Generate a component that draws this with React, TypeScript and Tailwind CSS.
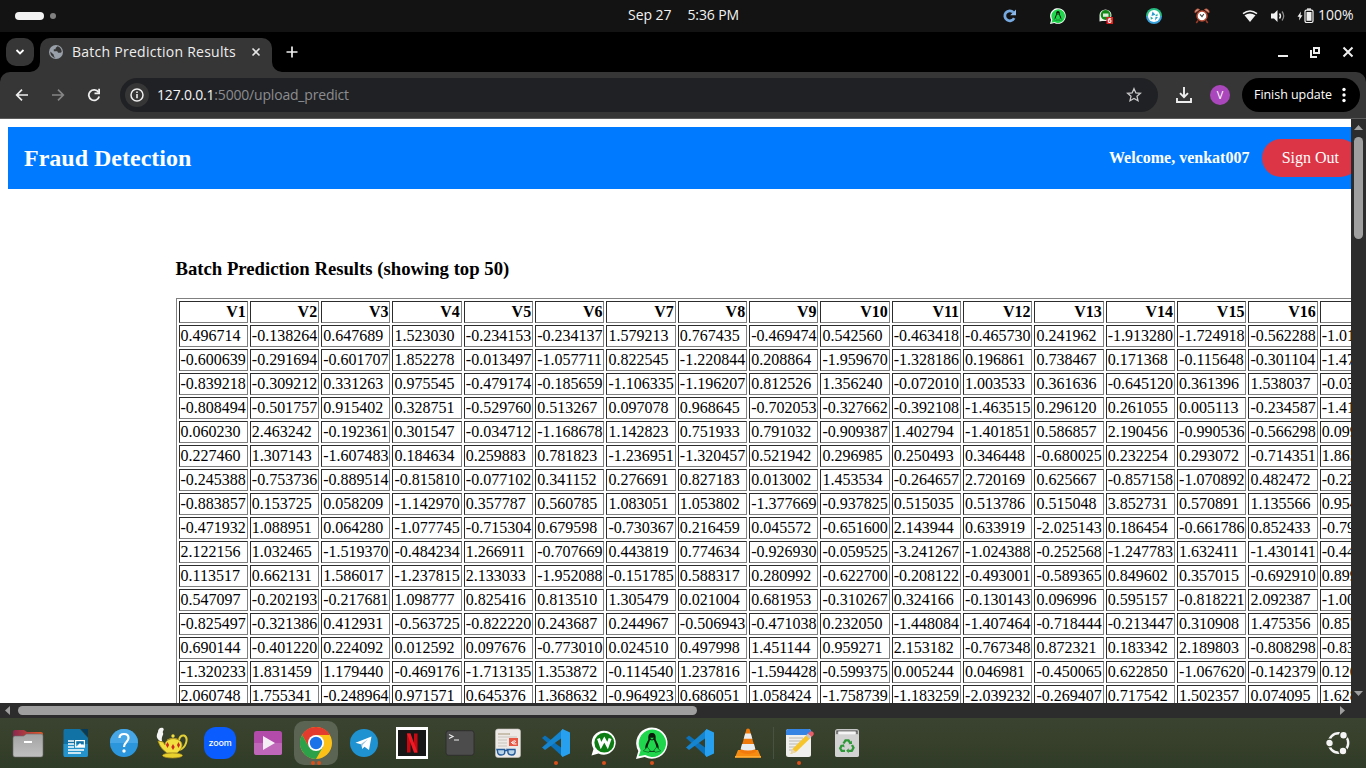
import type { ReactNode } from 'react';

const UI = "font-['Open_Sans','Noto_Sans',sans-serif]";

const DATA = `0.496714 -0.138264 0.647689 1.523030 -0.234153 -0.234137 1.579213 0.767435 -0.469474 0.542560 -0.463418 -0.465730 0.241962 -1.913280 -1.724918 -0.562288 -1.012831
-0.600639 -0.291694 -0.601707 1.852278 -0.013497 -1.057711 0.822545 -1.220844 0.208864 -1.959670 -1.328186 0.196861 0.738467 0.171368 -0.115648 -0.301104 -1.478522
-0.839218 -0.309212 0.331263 0.975545 -0.479174 -0.185659 -1.106335 -1.196207 0.812526 1.356240 -0.072010 1.003533 0.361636 -0.645120 0.361396 1.538037 -0.035826
-0.808494 -0.501757 0.915402 0.328751 -0.529760 0.513267 0.097078 0.968645 -0.702053 -0.327662 -0.392108 -1.463515 0.296120 0.261055 0.005113 -0.234587 -1.415371
0.060230 2.463242 -0.192361 0.301547 -0.034712 -1.168678 1.142823 0.751933 0.791032 -0.909387 1.402794 -1.401851 0.586857 2.190456 -0.990536 -0.566298 0.099651
0.227460 1.307143 -1.607483 0.184634 0.259883 0.781823 -1.236951 -1.320457 0.521942 0.296985 0.250493 0.346448 -0.680025 0.232254 0.293072 -0.714351 1.865775
-0.245388 -0.753736 -0.889514 -0.815810 -0.077102 0.341152 0.276691 0.827183 0.013002 1.453534 -0.264657 2.720169 0.625667 -0.857158 -1.070892 0.482472 -0.223463
-0.883857 0.153725 0.058209 -1.142970 0.357787 0.560785 1.083051 1.053802 -1.377669 -0.937825 0.515035 0.513786 0.515048 3.852731 0.570891 1.135566 0.954002
-0.471932 1.088951 0.064280 -1.077745 -0.715304 0.679598 -0.730367 0.216459 0.045572 -0.651600 2.143944 0.633919 -2.025143 0.186454 -0.661786 0.852433 -0.792521
2.122156 1.032465 -1.519370 -0.484234 1.266911 -0.707669 0.443819 0.774634 -0.926930 -0.059525 -3.241267 -1.024388 -0.252568 -1.247783 1.632411 -1.430141 -0.440044
0.113517 0.662131 1.586017 -1.237815 2.133033 -1.952088 -0.151785 0.588317 0.280992 -0.622700 -0.208122 -0.493001 -0.589365 0.849602 0.357015 -0.692910 0.899600
0.547097 -0.202193 -0.217681 1.098777 0.825416 0.813510 1.305479 0.021004 0.681953 -0.310267 0.324166 -0.130143 0.096996 0.595157 -0.818221 2.092387 -1.006017
-0.825497 -0.321386 0.412931 -0.563725 -0.822220 0.243687 0.244967 -0.506943 -0.471038 0.232050 -1.448084 -1.407464 -0.718444 -0.213447 0.310908 1.475356 0.857660
0.690144 -0.401220 0.224092 0.012592 0.097676 -0.773010 0.024510 0.497998 1.451144 0.959271 2.153182 -0.767348 0.872321 0.183342 2.189803 -0.808298 -0.839722
-1.320233 1.831459 1.179440 -0.469176 -1.713135 1.353872 -0.114540 1.237816 -1.594428 -0.599375 0.005244 0.046981 -0.450065 0.622850 -1.067620 -0.142379 0.120296
2.060748 1.755341 -0.248964 0.971571 0.645376 1.368632 -0.964923 0.686051 1.058424 -1.758739 -1.183259 -2.039232 -0.269407 0.717542 1.502357 0.074095 1.628616`
  .split('\n')
  .map((row) => row.split(' '));

function Slot({ w = 'w-12', children }: { w?: string; children: ReactNode }) {
  return <div className={`flex shrink-0 items-center justify-center ${w}`}>{children}</div>;
}

function TopBar() {
  return (
    <div className={`flex h-8 shrink-0 items-center bg-[#131313] text-[#f2f2f2] ${UI}`}>
      <div className="flex w-[628px] items-center gap-[6px] pl-[15px]">
        <span className="h-2 w-[29px] rounded-full bg-[#f2f2f2]" />
        <span className="size-[6px] rounded-full bg-[#808080]" />
      </div>
      <div className="flex w-[358px] gap-[16px] whitespace-nowrap pb-[2px] text-[14px] leading-[30px]">
        <span className="tracking-[-0.05px]">Sep 27</span>
        <span className="tracking-[-0.1px]">5:36 PM</span>
      </div>
      <Slot>
        <svg width="14" height="14" viewBox="0 0 14 14">
          <path d="M11.2 9.2A5 5 0 1 1 10.3 3.2" fill="none" stroke="#76a9e0" strokeWidth="2.8" />
          <path d="M7.2 6.2H13V.6z" fill="#8cb8ea" />
        </svg>
      </Slot>
      <Slot>
        <svg width="16" height="16" viewBox="0 0 48 48"><ChatPenguin /></svg>
      </Slot>
      <Slot>
        <svg width="16" height="16" viewBox="0 0 16 16">
          <path d="M1.5 13.500V7a6 5.800 0 1 1 6.500 6H4z" fill="#e8efe8" />
          <circle cx="7.600" cy="7" r="4.900" fill="#138a18" />
          <path d="M5 5.500h5.500v3.300H5z" fill="#dcebdc" />
          <rect x="8.500" y="9" width="6.500" height="7" fill="#e21d20" />
          <text x="9.800" y="15" fontSize="7" fontWeight="700" fill="#fff" fontFamily="Liberation Sans">6</text>
        </svg>
      </Slot>
      <Slot>
        <svg width="16" height="16" viewBox="0 0 16 16">
          <path d="M0 8a8 8 0 0 1 16 0z" fill="#25bd82" />
          <path d="M0 8a8 8 0 0 0 16 0z" fill="#3ba3dc" />
          <circle cx="8" cy="8" r="6" fill="#fff" />
          <path d="M6.500 3.500l3 3.200-4 1.300zM9.500 8.800l2.500.2-3 3.500z" fill="#2b9bd1" />
          <path d="M4.500 8.500l2.800 1.800-2.500 1.500zM11.500 5.500v2.600L9 8z" fill="#2fae9a" />
        </svg>
      </Slot>
      <Slot>
        <svg width="16" height="16" viewBox="0 0 16 16">
          <path d="M4 12.500L2.300 15M12 12.500l1.700 2.500" stroke="#9b3c29" strokeWidth="1.500" />
          <path d="M1 5A3 3 0 0 1 5.700 1.600zM15 5A3 3 0 0 0 10.300 1.600z" fill="#d99a88" stroke="#a84631" strokeWidth=".8" />
          <circle cx="8" cy="8" r="5" fill="#fff" stroke="#b64831" strokeWidth="1.500" />
          <path d="M6 6.300L8 8.600 9.800 6" fill="none" stroke="#444" strokeWidth="1.100" />
        </svg>
      </Slot>
      <Slot>
        <svg width="16" height="14" viewBox="0 0 16 14">
          <path d="M1 4.7Q8-.8 15 4.7" fill="none" stroke="#f2f2f2" strokeWidth="1.5" />
          <path d="M2.5 6.3Q8 2.5 13.5 6.3L8 13z" fill="#f2f2f2" />
        </svg>
      </Slot>
      <Slot w="w-[8px]">
        <svg className="shrink-0" width="16" height="14" viewBox="0 0 16 14">
          <path d="M1 4.5h3L7.5 1v12L4 9.5H1z" fill="#f2f2f2" />
          <path d="M9.5 4.5q2 2.5 0 5" fill="none" stroke="#f2f2f2" strokeWidth="1.4" />
          <path d="M12 2.5q3.4 4.5 0 9" fill="none" stroke="#8a8a8a" strokeWidth="1.3" />
        </svg>
      </Slot>
      <Slot w="w-[36px] pl-[11px]">
        <svg className="shrink-0" width="18" height="16" viewBox="0 0 18 16">
          <path d="M4 3.5L.5 8.8h2L2 12.5l3.5-5.3h-2z" fill="#f2f2f2" />
          <rect x="8" y="2.200" width="8" height="12.300" rx="1.400" fill="none" stroke="#f2f2f2" strokeWidth="1.200" />
          <rect x="9.500" y="4" width="5" height="8.800" fill="#f2f2f2" />
          <path d="M10 1.100h4" stroke="#f2f2f2" strokeWidth="1.400" />
        </svg>
      </Slot>
      <span className="pb-[2px] text-[14px] leading-[30px]">100%</span>
    </div>
  );
}

function TabStrip() {
  return (
    <div className={`flex h-10 shrink-0 items-start bg-black pt-[6px] text-[#eee] ${UI}`}>
      <div className="ml-[6px] flex size-7 items-center justify-center rounded-[10px] bg-[#363636]">
        <svg width="10" height="6" viewBox="0 0 10 6"><path d="M1.5 1L5 4.5 8.5 1" fill="none" stroke="#fff" strokeWidth="1.8" /></svg>
      </div>
      <div className="relative ml-[6px] flex h-[34px] w-[232px] items-start rounded-t-[10px] bg-[#363636]">
        <svg className="absolute bottom-0 -left-[10px]" width="10" height="10"><path d="M10 0v10H0A10 10 0 0 0 10 0" fill="#363636" /></svg>
        <svg className="absolute -right-[10px] bottom-0" width="10" height="10"><path d="M0 0v10h10A10 10 0 0 1 0 0" fill="#363636" /></svg>
        <div className="flex h-7 w-full items-center pl-[9px]">
          <svg width="14" height="14" viewBox="0 0 14 14">
            <circle cx="7" cy="7" r="7" fill="#9aa0a9" />
            <path d="M8.500 1.300L6.600 3v1.300H4.800v2h3.400l.9 1.500h2.400L12.700 7C12.700 3.500 10 1.500 8.500 1.300zM1.400 6.500l3.400 3.300v1.500l1.700 1.400C3.500 12.500 1.100 10 1.400 6.500z" fill="#363636" />
          </svg>
          <span className="ml-[9px] w-[179px] whitespace-nowrap text-[14px] leading-7 tracking-[0.26px]">Batch Prediction Results</span>
          <svg width="10" height="10" viewBox="0 0 10 10"><path d="M1.5 1.5l7 7m0-7l-7 7" stroke="#e5e5e5" strokeWidth="1.6" /></svg>
        </div>
      </div>
      <div className="flex h-7 w-10 items-center justify-center">
        <svg width="12" height="12"><path d="M6 .5v11M.5 6h11" stroke="#eee" strokeWidth="1.7" /></svg>
      </div>
      <div className="ml-auto flex h-7 items-center pr-[12px]">
        <svg width="11" height="12"><path d="M1 10h10" stroke="#eee" strokeWidth="2" /></svg>
        <svg className="ml-[21px]" width="12" height="11"><path d="M5 1h5v5H5zM2 3v7h6" fill="none" stroke="#eee" strokeWidth="2" /></svg>
        <svg className="ml-[21px]" width="12" height="12"><path d="M1.500 1.500l9 9m0-9l-9 9" stroke="#eee" strokeWidth="2" /></svg>
      </div>
    </div>
  );
}

function Toolbar() {
  return (
    <div className={`shrink-0 bg-black ${UI}`}>
      <div className="flex h-[47px] items-center rounded-t-[10px] border-b border-[#5c5c5c] bg-[#363636] pr-[6px]">
        <svg className="ml-[15px]" width="14" height="14" viewBox="0 0 14 14"><path d="M13 7H2M7 1.700L1.700 7 7 12.300" fill="none" stroke="#eee" strokeWidth="1.700" /></svg>
        <svg className="ml-[22px]" width="14" height="14" viewBox="0 0 14 14"><path d="M1 7h11M7 1.700L12.300 7 7 12.300" fill="none" stroke="#858585" strokeWidth="1.700" /></svg>
        <svg className="ml-[22px]" width="14" height="14" viewBox="0 0 14 14"><path d="M12.200 8.500A5.300 5.300 0 1 1 11.500 4.200" fill="none" stroke="#eee" strokeWidth="1.800" /><path d="M13 .7v5.600H7.500V4.600h3.700V.7z" fill="#eee" /></svg>
        <div className="ml-[19px] flex h-[34px] w-[1038px] items-center rounded-full bg-[#202125] pl-[5px]">
          <div className="flex size-6 items-center justify-center rounded-full bg-[#363636]">
            <svg width="14" height="14"><circle cx="7" cy="7" r="6" fill="none" stroke="#eee" strokeWidth="1.500" /><path d="M7 6v4.300M7 3.600v1.500" stroke="#eee" strokeWidth="1.600" /></svg>
          </div>
          <span className="ml-[8px] w-[969px] whitespace-nowrap text-[14px] leading-[34px] tracking-[-0.19px] text-[#8b8d90]"><span className="text-[#f5f5f5]">127.0.0.1</span>:5000/upload_predict</span>
          <svg width="16" height="16" viewBox="0 0 16 16"><path d="M8 1.700l1.900 4.200 4.500.4-3.400 3 1 4.400L8 11.400l-4 2.300 1-4.400-3.400-3 4.500-.4z" fill="none" stroke="#c9c9c9" strokeWidth="1.300" /></svg>
        </div>
        <svg className="ml-[18px]" width="16" height="16" viewBox="0 0 16 16"><path d="M8 0v10M4 6.200l4 4 4-4M1 11v4h14v-4" fill="none" stroke="#eee" strokeWidth="1.900" /></svg>
        <div className="ml-[18px] flex size-5 items-center justify-center rounded-full bg-[#ab47bc] text-[11px] text-white">V</div>
        <div className="ml-[12px] flex h-[34px] w-[118px] items-center rounded-full bg-black pl-[12px] text-white">
          <span className="w-[88px] whitespace-nowrap pt-px text-[12.500px] tracking-[-0.05px]">Finish update</span>
          <svg width="4" height="16"><circle cx="2" cy="2.500" r="1.700" fill="#fff" /><circle cx="2" cy="8" r="1.700" fill="#fff" /><circle cx="2" cy="13.500" r="1.700" fill="#fff" /></svg>
        </div>
      </div>
    </div>
  );
}

function Page() {
  return (
    <div className="h-[584px] w-[1351px] overflow-hidden bg-white pt-2 pl-2 font-['Liberation_Serif',serif] text-[16px] leading-[18px] text-black">
      <header className="flex h-[62px] w-[1359px] items-center bg-[#007bff] pl-4 text-white">
        <h1 className="w-[1085px] text-[24px] leading-[27px] font-bold">Fraud Detection</h1>
        <span className="w-[152.700px] shrink-0 font-bold">Welcome, venkat007</span>
        <span className="shrink-0 rounded-[20px] bg-[#dc3545] px-[20px] py-[10px]">Sign Out</span>
      </header>
      <main className="pt-[69px] pl-[167.500px]">
        <h3 className="mb-[19px] text-[18.720px] leading-[21px] font-bold">Batch Prediction Results (showing top 50)</h3>
        <table className="w-max border-separate border-spacing-[2px] border border-[#808080] [border-style:outset]">
          <thead>
            <tr>
              {DATA[0].map((_, i) => (
                <th key={i} className="border border-[#808080] p-px text-right font-bold [border-style:inset]">V{i + 1}</th>
              ))}
            </tr>
          </thead>
          <tbody>
            {DATA.map((row, r) => (
              <tr key={r}>
                {row.map((v, c) => (
                  <td key={c} className="border border-[#808080] p-px [border-style:inset]">{v}</td>
                ))}
              </tr>
            ))}
          </tbody>
        </table>
      </main>
    </div>
  );
}

function VScroll() {
  return (
    <div className="flex w-[15px] flex-col items-center bg-[#2c2c2c] pt-[6px]">
      <svg width="9" height="5"><path d="M0 5L4.500 0 9 5z" fill="#9f9f9f" /></svg>
      <div className="mt-[7px] h-[102px] w-[9px] rounded-full bg-[#9f9f9f]" />
      <svg className="mt-auto mb-[7px]" width="9" height="5"><path d="M0 0l4.500 5L9 0z" fill="#9f9f9f" /></svg>
    </div>
  );
}

function HScroll() {
  return (
    <div className="flex h-[15px] shrink-0 items-center bg-[#2c2c2c] pl-[5px]">
      <svg width="5" height="9"><path d="M5 0L0 4.500 5 9z" fill="#9f9f9f" /></svg>
      <div className="ml-[8px] h-[9px] w-[679px] rounded-full bg-[#9f9f9f]" />
      <svg className="mr-[21px] ml-auto" width="5" height="9"><path d="M0 0l5 4.500L0 9z" fill="#9f9f9f" /></svg>
    </div>
  );
}

function ChatPenguin() {
  return (
    <>
      <path d="M0 48l3.500-12A23.500 23.500 0 1 1 13 45z" fill="#fff" />
      <path d="M4 44l3-9A20.500 20.500 0 1 1 14 42z" fill="#1fd64c" />
      <path d="M24 9c-5 0-6 4-5.500 9.500C18 22 13 26 14 34l4 3h12l4-3c1-8-4-12-4.500-15.500C30 13 29 9 24 9z" fill="#0b1a0d" />
      <path d="M21 19q3 2 6 0c1 5 5 9 3 15q-6 4-12 0c-2-6 2-10 3-15z" fill="#1fd64c" />
      <path d="M17 30l-6 6 8 2 2-3zM31 30l6 6-8 2-2-3z" fill="#1fd64c" stroke="#0b5a1d" />
      <path d="M21 16h6l-3 3z" fill="#1fd64c" />
    </>
  );
}

function VsCode() {
  return (
    <svg width="30" height="30" viewBox="0 0 30 30">
      <path d="M1 10l3-2.500L22 21v8z" fill="#0b71b8" />
      <path d="M1 19.500L22 1v8L4 22z" fill="#1685cf" />
      <path d="M21.500 1L29 4.500v21L21.500 29l-1.500-2V3z" fill="#27a1ef" />
    </svg>
  );
}

function Dots({ n }: { n: number }) {
  return (
    <span className="absolute bottom-[3px] left-0 flex w-full justify-center gap-[2px]">
      {Array.from({ length: n }, (_, i) => <span key={i} className="size-1 rounded-full bg-[#d9501c]" />)}
    </span>
  );
}

function DockItem({ children, dots = 0, active = false }: { children: ReactNode; dots?: number; active?: boolean }) {
  return (
    <div className="relative flex h-[50px] w-12 shrink-0 items-center justify-center">
      <div className={active ? 'flex size-11 items-center justify-center rounded-[10px] bg-[#5b6353]' : ''}>{children}</div>
      <Dots n={dots} />
    </div>
  );
}

function Dock() {
  return (
    <div className="flex h-[50px] shrink-0 items-center bg-[linear-gradient(180deg,#3a4330_0%,#36402a_50%,#303b28_100%)] pl-1">
      <DockItem>
        <svg width="32" height="30" viewBox="0 0 32 30">
          <defs>
            <linearGradient id="fo"><stop stopColor="#8a2750" /><stop offset="1" stopColor="#e55a26" /></linearGradient>
            <linearGradient id="fg" x2="0" y2="1"><stop stopColor="#a3a3a3" /><stop offset="1" stopColor="#c0c0c0" /></linearGradient>
          </defs>
          <path d="M1 4q0-2 2-2h9l3 2h14q2 0 2 2v6H1z" fill="url(#fo)" />
          <path d="M1 10q0-2 2-2h8.500l3-2H29q2 0 2 2v19q0 2-2 2H3q-2 0-2-2z" fill="url(#fg)" stroke="#686868" strokeWidth=".6" />
          <path d="M12 14h8" stroke="#fff" strokeWidth="2" />
        </svg>
      </DockItem>
      <DockItem>
        <svg width="26" height="30" viewBox="0 0 26 30">
          <path d="M2 1h15l8 9v17q0 2-2 2H2q-1.500 0-1.500-2V3Q.5 1 2 1z" fill="#1172a5" />
          <path d="M.5 16H25v11q0 2-2 2H2q-1.500 0-1.500-2z" fill="#2493cc" />
          <path d="M18 1h7v8z" fill="#063c59" />
          <path d="M5 13h6M5 16h6M5 19h6M5 22h16M5 25h13" stroke="#fff" strokeWidth="1.300" />
          <rect x="12.600" y="12.600" width="8.800" height="6.500" fill="none" stroke="#fff" strokeWidth="1.200" />
          <path d="M13 19l4-4 2 2 1-1 2 3z" fill="#fff" />
        </svg>
      </DockItem>
      <DockItem>
        <svg width="30" height="30" viewBox="0 0 30 30">
          <circle cx="15" cy="15" r="14" fill="#2b96dc" />
          <path d="M1 15a14 14 0 0 1 28 0z" fill="#46a6e6" />
          <path d="M10.500 10q0-4 4.500-4 4.500 0 4.500 4c0 4-4.500 4-4.500 9" fill="none" stroke="#fff" strokeWidth="2.200" />
          <circle cx="15" cy="23" r="1.700" fill="#fff" />
        </svg>
      </DockItem>
      <DockItem>
        <svg width="34" height="32" viewBox="0 0 34 32">
          <path d="M5 14C0 11 2 7 3 5c0-3 2-5 5-4 2 2-1 3 0 5s-2 3-1 8z" fill="#f4f4f4" />
          <path d="M24 13q1-5 5-4.500c5 2 2 13-5 14.500" fill="none" stroke="#e2cf35" strokeWidth="2" />
          <path d="M3 14l5 1 2 3c0-8 16-9 17 0 0 4-3 6-5 8H12c-4-3-7-6-9-12z" fill="#f0df3e" stroke="#ae9422" strokeWidth=".8" />
          <ellipse cx="17.500" cy="28.500" rx="10" ry="2.500" fill="#e8d12d" stroke="#a98c1c" strokeWidth=".7" />
          <path d="M12 13q6-3.500 12 0" fill="none" stroke="#ae9422" />
          <circle cx="18" cy="9" r="1.700" fill="#f0df3e" />
          <path d="M12.500 15l1.600 3-1.600 3-1.600-3zM18 17l1.700 3-1.700 3-1.700-3zM23.500 15l1.500 3-1.500 3-1.500-3z" fill="#c92a23" />
        </svg>
      </DockItem>
      <DockItem>
        <div className="flex size-8 items-center justify-center rounded-[12px] bg-[#0b5cff] pb-px font-['Inter',sans-serif] text-[9px] font-medium tracking-[-0.200px] text-white">zoom</div>
      </DockItem>
      <DockItem>
        <svg width="28" height="26" viewBox="0 0 28 26">
          <rect y="1" width="28" height="24" rx="2.500" fill="#b34bab" />
          <path d="M0 13h28v9.500q0 2.500-2.500 2.500h-23Q0 25 0 22.500z" fill="#c067b9" />
          <path d="M9 6l12 7-12 7z" fill="#f5edf4" />
        </svg>
      </DockItem>
      <DockItem active dots={2}>
        <svg width="32" height="32" viewBox="0 0 32 32">
          <circle cx="16" cy="16" r="16" fill="#fbc116" />
          <path d="M2.140 8A16 16 0 0 1 29.860 8H16L9.100 20z" fill="#e33b2e" />
          <path d="M2.140 8A16 16 0 0 0 16 32l6.900-12H9.100z" fill="#2da04a" />
          <circle cx="16" cy="16" r="8" fill="#fff" />
          <circle cx="16" cy="16" r="6.200" fill="#1a73e8" />
        </svg>
      </DockItem>
      <DockItem>
        <svg width="28" height="28" viewBox="0 0 28 28">
          <circle cx="14" cy="14" r="14" fill="#1f92d1" />
          <path d="M5.500 13.800L21.500 7.500 19 21l-4.500-3.300-2.300 2.300-.6-4.600z" fill="#fff" />
          <path d="M11 15l7-4.700-5.500 5.700-.4 3.300z" fill="#9fc5dc" />
        </svg>
      </DockItem>
      <DockItem>
        <svg width="32" height="32" viewBox="0 0 32 32">
          <rect width="32" height="32" fill="#fff" /><rect x="2" y="3" width="28" height="26" fill="#171717" />
          <path d="M11 6.500h3.500v19H11zM18 6.500h3.500v19H18z" fill="#c90912" /><path d="M11 6.500h3.500l7 19H18z" fill="#f01a25" />
        </svg>
      </DockItem>
      <DockItem>
        <svg width="30" height="26" viewBox="0 0 30 26">
          <rect x="1" y=".7" width="28" height="24.600" rx="2.500" fill="#4c4c4c" stroke="#2f2f2f" />
          <path d="M4 4.500l4 2-4 2M9 10h5" fill="none" stroke="#eee" strokeWidth="1.200" />
        </svg>
      </DockItem>
      <DockItem>
        <svg width="26" height="30" viewBox="0 0 26 30">
          <rect x=".5" y="1" width="25" height="28.500" rx="2.500" fill="#ece9e6" stroke="#c3c0bc" strokeWidth=".6" />
          <path d="M3 6h12" stroke="#b6aa91" strokeWidth="1.300" />
          <path d="M3 9h19M3 12h9M3 15h9M3 18h9" stroke="#c9c4bb" strokeWidth="1" />
          <rect x="14" y="10" width="9" height="8" fill="#e85743" />
          <path d="M16.500 14.500q4-3 4-1-3 3-4 1 1 2 5 1.500" fill="none" stroke="#fff" />
          <path d="M2 21.500h7.500c1 5-1 5.500-3.500 5.500s-3.500-1-3.500-4zM12.500 21.500H20c.5 4-.5 5.500-3.500 5.500s-4-2-3.500-5zM9.500 22.500h3.500" fill="#b8d3e8" stroke="#235b9a" strokeWidth="1.400" />
        </svg>
      </DockItem>
      <DockItem dots={1}><VsCode /></DockItem>
      <DockItem dots={1}>
        <svg width="26" height="26" viewBox="0 0 26 26">
          <path d="M.5 25.500L2.500 19a12 12 0 1 1 5 4.500z" fill="#fff" />
          <circle cx="13.300" cy="12.700" r="9.900" fill="#0c7d13" />
          <path d="M7.500 8.500l2.500 7 3.300-6 3.300 6 2.500-7" fill="none" stroke="#fff" strokeWidth="3" />
        </svg>
      </DockItem>
      <DockItem dots={1}><svg width="32" height="32" viewBox="0 0 48 48"><ChatPenguin /></svg></DockItem>
      <DockItem><VsCode /></DockItem>
      <DockItem>
        <svg width="28" height="30" viewBox="0 0 28 30">
          <path d="M4 22h20l3 7.500H1z" fill="#f68b12" />
          <path d="M12.500 1q1.500-1 3 0L22 24q-8 4-16 0z" fill="#f17a0c" />
          <path d="M11.200 5.500h5.600l1.500 5.200H9.700zM8 16h12l1.400 5.200q-7.400 2.600-14.800 0z" fill="#e9edf0" />
          <path d="M1 28h26v1.700H1z" fill="#ffab31" />
        </svg>
      </DockItem>
      <div className="flex w-[3px] shrink-0 justify-center"><span className="h-8 w-px bg-[#485142]" /></div>
      <DockItem dots={1}>
        <svg width="30" height="30" viewBox="0 0 30 30">
          <rect x="2" y="1" width="25" height="28" rx="2.500" fill="#efefed" />
          <path d="M2 7V3.500Q2 1 4.500 1h20Q27 1 27 3.500V7z" fill="#3584e4" />
          <path d="M5 10h14M5 13h12M5 16h10M5 19h8M5 22h5" stroke="#b9b7b3" />
          <path d="M8.500 21L23 6.500l3.500 3.500L12 24l-5.500 2z" fill="#f6c52c" />
          <path d="M8.500 21l-2 5 5.500-2z" fill="#e9d6b0" />
          <path d="M22 7.500l2-2 3.500 3.500-2 2z" fill="#c9c7c3" /><path d="M24 5.500l1.500-1.500q2-1.500 3.500 0t0 3.500L27.500 9z" fill="#ea5d68" />
        </svg>
      </DockItem>
      <DockItem>
        <svg width="26" height="30" viewBox="0 0 26 30">
          <rect x="1" y="1" width="24" height="28" rx="2.500" fill="#c6c6c6" />
          <path d="M1 7h24v19.500q0 2.500-2.500 2.500h-19Q1 29 1 26.500z" fill="#d2d2d2" />
          <path d="M3 6V3h20v3" fill="none" stroke="#4d4d4d" strokeWidth="1.200" /><path d="M4.500 3.500h17v3h-17z" fill="#f5f5f5" />
          <g fill="none" stroke="#2e9838" strokeWidth="2.300">
            <path d="M9.500 15.500l2-3.200h3l1.800 2.800M18 17l1.500 2.800-1.700 3h-3.500M11 22.800H7.700L6.200 20.300l1.800-3.200" />
          </g>
          <path d="M14.500 16.300l3.500-.2-.2-3.600zM14.700 20.300v5L12.200 22.800zM6 17.300l4-1 .6 3.300z" fill="#2e9838" />
        </svg>
      </DockItem>
      <div className="mr-[16px] ml-auto">
        <svg width="24" height="24" viewBox="0 0 24 24">
          <circle cx="12.500" cy="12" r="9.700" fill="none" stroke="#f4f4f4" strokeWidth="2.400" />
          <g fill="#f4f4f4" stroke="#36402a" strokeWidth="1.400"><circle cx="3.500" cy="12" r="3.900" /><circle cx="17.500" cy="4.200" r="3.900" /><circle cx="17" cy="20" r="3.900" /></g>
        </svg>
      </div>
    </div>
  );
}

export default function App() {
  return (
    <div className="flex h-[768px] w-[1366px] flex-col overflow-hidden bg-black">
      <TopBar />
      <TabStrip />
      <Toolbar />
      <div className="flex h-[584px] shrink-0">
        <Page />
        <VScroll />
      </div>
      <HScroll />
      <Dock />
    </div>
  );
}
